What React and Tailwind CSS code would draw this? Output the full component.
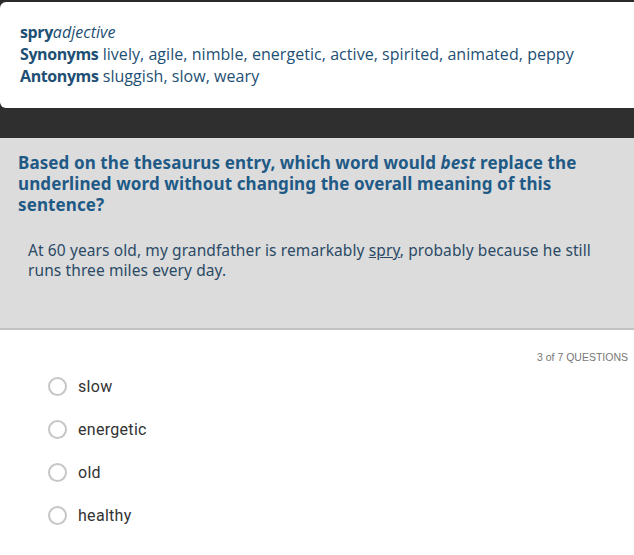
export default function App() {
  const options = ["slow", "energetic", "old", "healthy"];
  return (
    <div className="w-[634px] h-[555px] bg-white overflow-hidden">
      <div className="bg-[#2b2b2b] pt-[2px]">
        <div
          className="bg-white rounded-l-[6px] h-[106px] pl-[20px] pt-[19px] text-[16px] leading-[22px] text-[#1e4f74] tracking-[0.05px]"
          style={{ fontFamily: '"Open Sans", "Noto Sans", sans-serif' }}
        >
          <div>
            <span className="font-bold tracking-[-0.4px]">spry</span>
            <span className="italic">adjective</span>
          </div>
          <div>
            <span className="font-bold tracking-[-0.4px]">Synonyms</span> lively, agile, nimble, energetic, active, spirited, animated, peppy
          </div>
          <div>
            <span className="font-bold tracking-[-0.4px]">Antonyms</span> sluggish, slow, weary
          </div>
        </div>
        <div className="h-[30px] bg-[#2f2f2f]" />
      </div>
      <div
        className="bg-[#dcdcdc] h-[192px] border-b-[2px] border-[#c2c2c2] pt-[14px]"
        style={{ fontFamily: '"Noto Sans", "Open Sans", sans-serif' }}
      >
        <div className="pl-[18px] pr-[40px] text-[17px] leading-[21px] font-bold text-[#1f5a86] tracking-[0.1px]">
          Based on the thesaurus entry, which word would <em className="italic">best</em> replace the underlined word without changing the overall meaning of this sentence?
        </div>
        <div className="pl-[28px] pr-[40px] mt-[25px] text-[15.5px] leading-[20px] text-[#2b4a66] tracking-[0.1px]">
          At 60 years old, my grandfather is remarkably <span className="underline">spry</span>, probably because he still runs three miles every day.
        </div>
      </div>
      <div style={{ fontFamily: '"Roboto", "Noto Sans", sans-serif' }}>
        <div
          className="text-right pr-[6px] pt-[21px] text-[10.5px] leading-[12px] text-[#777777]"
          style={{ fontFamily: '"Liberation Sans", Arial, sans-serif' }}
        >
          3 of 7 QUESTIONS
        </div>
        <div className="flex flex-col gap-[24px] mt-[14px] pl-[48px]">
          {options.map((o) => (
            <div key={o} className="flex items-center h-[19px]">
              <div className="w-[19px] h-[19px] rounded-full border-[2px] border-[#c6c6c6] bg-white" />
              <span className="ml-[11px] text-[16px] text-[#333333] tracking-[0.3px]">{o}</span>
            </div>
          ))}
        </div>
      </div>
    </div>
  );
}
